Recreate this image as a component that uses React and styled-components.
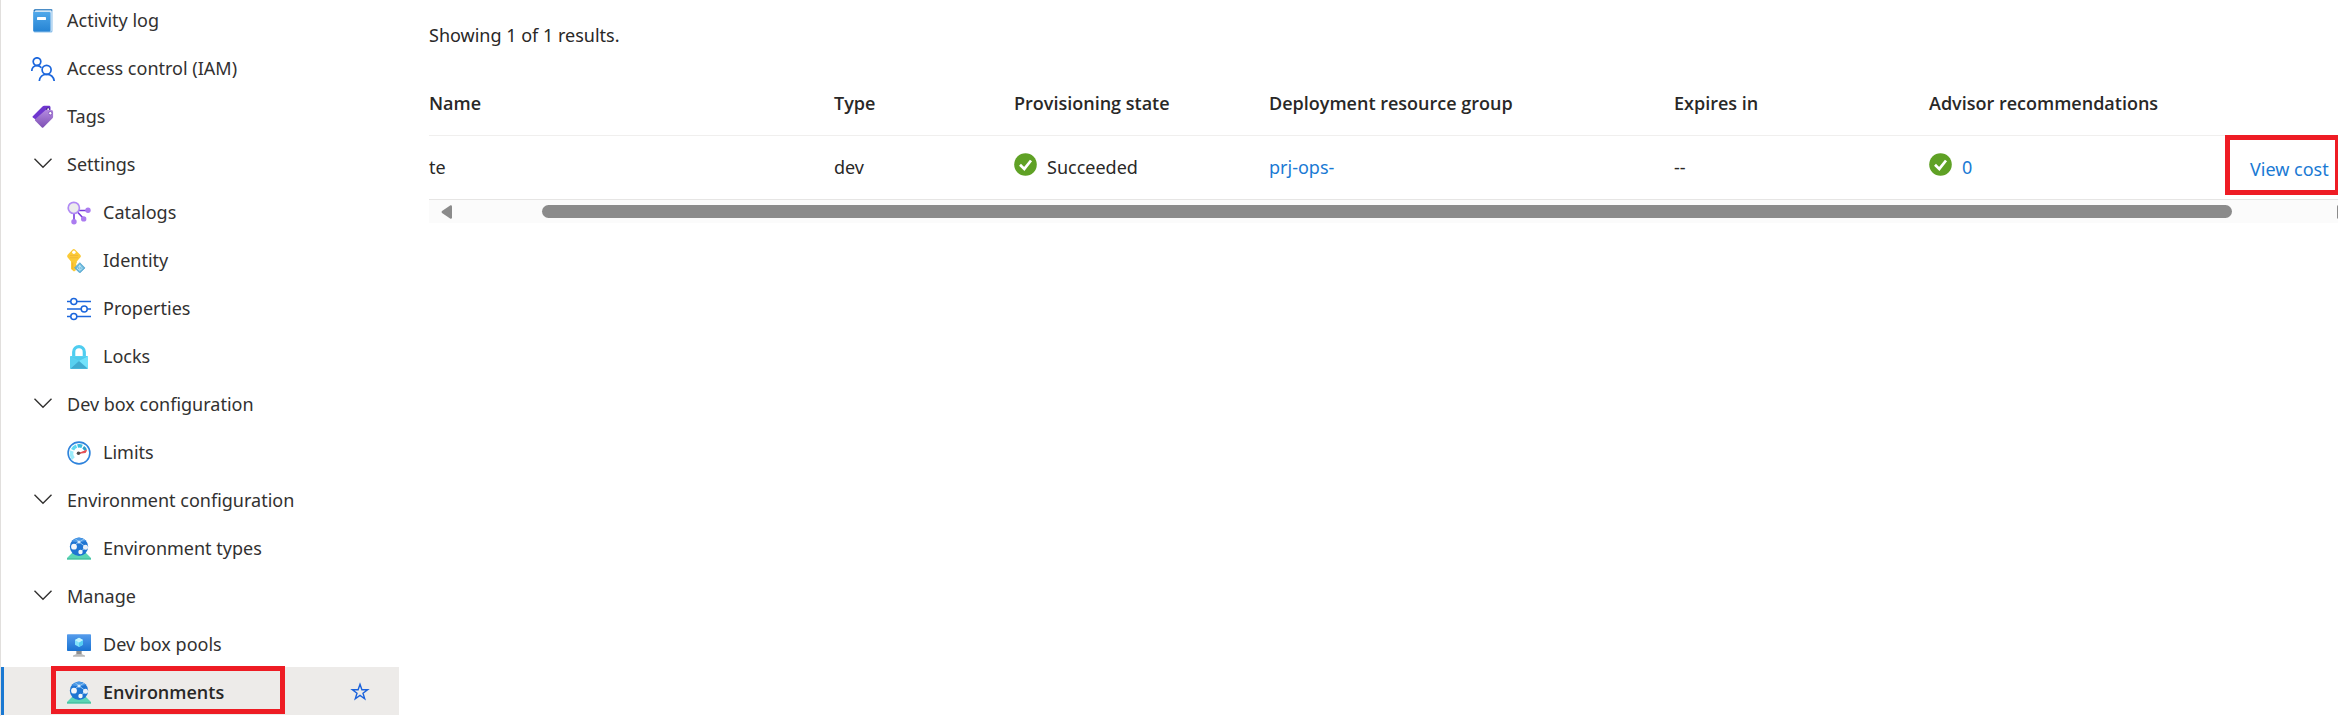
import React from "react";
import styled, { createGlobalStyle, css } from "styled-components";

const GlobalStyle = createGlobalStyle`
  *, *::before, *::after { box-sizing: border-box; }
  body {
    margin: 0;
    background: #fff;
    color: #292827;
    font-family: "Noto Sans", "Open Sans", sans-serif;
    font-size: 18px;
    line-height: 24px;
    overflow: hidden;
  }
  button { font: inherit; color: inherit; border: 0; background: none; padding: 0; cursor: pointer; }
  a { color: #1a7ad4; text-decoration: none; }
`;

const Page = styled.div`
  display: flex;
  align-items: stretch;
  min-height: 100vh;
  overflow: hidden;
`;

const Sidebar = styled.nav`
  flex: 0 0 399px;
  border-left: 1px solid #e1dfdd;
  margin-top: -5px;
`;

const MenuList = styled.ul`
  list-style: none;
  margin: 0;
  padding: 0;
`;

const MenuItem = styled.li`
  position: relative;
  display: flex;
  align-items: center;
  height: 48px;
  padding-top: 2px;
  padding-right: 29px;
  padding-left: ${(p) => (p.$nested ? 66 : 30)}px;
  color: #323130;
  ${(p) =>
    p.$selected &&
    css`
      background: #edebe9;
      box-shadow: inset 3px 0 0 #1a78d2;
      color: #292827;
      font-family: "Open Sans", "Noto Sans", sans-serif;
      font-weight: 600;
    `}
`;

const menuControl = css`
  display: flex;
  align-items: center;
  gap: 12px;
  flex: 1;
  height: 26px;
  color: inherit;
  text-align: left;
  white-space: nowrap;
  svg { flex: none; display: block; }
`;
const MenuLink = styled.a`
  ${menuControl}
  svg { margin-top: 2px; }
`;
const GroupToggle = styled.button`${menuControl}`;

const FavoriteButton = styled.button`
  display: block;
  height: 20px;
  svg { display: block; }
`;

const Highlight = styled.span`
  position: absolute;
  top: ${(p) => p.$top}px;
  left: ${(p) => p.$left}px;
  width: ${(p) => p.$width}px;
  height: ${(p) => p.$height}px;
  border: 5px solid #ee1c24;
  pointer-events: none;
`;

const Main = styled.main`
  flex: 1;
  min-width: 0;
  padding: 23px 0 0 30px;
  overflow: hidden;
`;

const ResultCount = styled.p`
  margin: 0 0 25px;
`;

const Grid = styled.div`
  margin-right: -22px;
`;

const Table = styled.table`
  width: 100%;
  table-layout: fixed;
  border-collapse: separate;
  border-spacing: 0;
`;
const Col = styled.col`
  width: ${(p) => (p.$width ? `${p.$width}px` : "auto")};
`;
const HeaderCell = styled.th`
  height: 64px;
  padding: 0 0 2px;
  border-bottom: 1px solid #f0efee;
  font-family: "Open Sans", "Noto Sans", sans-serif;
  font-weight: 600;
  text-align: left;
  white-space: nowrap;
`;
const Cell = styled.td`
  position: relative;
  height: 64px;
  padding: 0 0 2px;
  border-bottom: 1px solid #e6e5e4;
  white-space: nowrap;
`;
const Status = styled.span`
  display: flex;
  align-items: center;
  gap: 10px;
  height: 28px;
  svg { flex: none; margin-bottom: 4px; }
`;
const CostLink = styled.a`
  display: block;
  padding-top: 4px;
`;

const ScrollBar = styled.div`
  display: flex;
  align-items: center;
  height: 23px;
  padding: 0 12px;
  background: #fbfbfb;
`;
const ScrollArrow = styled.button`
  flex: none;
  width: 11px;
  height: 14px;
  svg { display: block; }
`;
const ScrollRail = styled.div`
  flex: 1;
  padding: 0 105px 0 90px;
`;
const ScrollThumb = styled.div`
  height: 13px;
  border-radius: 7px;
  background: #8b8b8b;
`;

const Icon = ({ children, size = 24, box = "0 0 24 24" }) => (
  <svg width={size} height={size} viewBox={box} fill="none" aria-hidden="true">
    {children}
  </svg>
);

const LogIcon = () => (
  <Icon>
    <defs>
      <linearGradient id="log" x1="0" y1="0" x2="0" y2="1">
        <stop offset="0" stopColor="#50a8ea" />
        <stop offset="1" stopColor="#2684d4" />
      </linearGradient>
    </defs>
    <path d="M4 .5h16a1.500 1.500 0 0 1 1.500 1.500v20a1.500 1.500 0 0 1-1.500 1.500H4A1.500 1.500 0 0 1 2.500 22V2A1.500 1.500 0 0 1 4 .5z" fill="#8cbfe9" />
    <path d="M4 .3h16.500a1 1 0 0 1 1 1L20 2.500H2.600V2A1.700 1.700 0 0 1 4 .3z" fill="#2373b8" />
    <path d="M4.500 1.300H20V3H3.500z" fill="#cfe4f6" />
    <path d="M19.500 2l1-.8v20.600l-1 .6z" fill="#e6f2fb" />
    <path d="M2.200 3h15.600c1 0 1.600.5 1.600 1.500V21c0 1-.5 1.500-1.500 1.500H3.500c-.8 0-1.300-.5-1.300-1.300z" fill="url(#log)" />
    <rect x="6" y="8" width="9" height="3" rx=".4" fill="#fff" />
  </Icon>
);

const PeopleIcon = () => (
  <Icon>
    <g stroke="#1b66dc" strokeWidth="1.700" fill="none">
      <circle cx="6" cy="4.600" r="3.800" />
      <path d="M.8 14C.8 10.800 3 8.600 6 8.600c1.900 0 3.300.7 4.400 2.100" />
      <circle cx="15.600" cy="12.800" r="4.500" />
      <path d="M8.300 24c.3-4 3.300-6.700 7.300-6.700s7 2.700 7.600 6.700" />
    </g>
  </Icon>
);

const TagIcon = () => (
  <Icon>
    <defs>
      <linearGradient id="tag" x1="0" y1="0" x2="0" y2="1">
        <stop offset="0" stopColor="#b48ae0" />
        <stop offset="1" stopColor="#7e50b4" />
      </linearGradient>
    </defs>
    <path d="M1.800 11.200L11.500 1.500c.5-.5 1-.7 1.700-.7h4.700c1 0 1.600.6 1.600 1.500V8L7.500 16.500l-5.700-4.100c-.5-.4-.5-.8 0-1.200z" fill="#6f36cf" />
    <circle cx="17" cy="4.200" r="1.800" fill="#3b1f78" />
    <circle cx="17.200" cy="4.200" r="1" fill="#fff" />
    <path d="M4.200 14.200L14.300 5.300c.5-.5 1-.6 1.700-.6l4.500.4c1 .1 1.600.7 1.600 1.600v5c0 .6-.2 1.100-.6 1.500l-9.200 9.200c-.5.5-1 .5-1.400 0l-6.700-6.700c-.5-.5-.5-1 0-1.500z" fill="url(#tag)" />
    <circle cx="19.300" cy="8.200" r="1.700" fill="#fff" stroke="#7647b4" strokeWidth=".8" />
  </Icon>
);

const ChevronIcon = () => (
  <Icon>
    <path d="M3.500 6.700l8.500 8.500 8.500-8.500" stroke="#323130" strokeWidth="1.400" />
  </Icon>
);

const CatalogIcon = () => (
  <Icon>
    <g stroke="#773adc" strokeWidth="1.600">
      <path d="M7 12v8M9.500 10l7 7.500M11 9.500h10" />
    </g>
    <circle cx="6.800" cy="6.900" r="5.600" fill="#ececec" stroke="#b18af5" strokeWidth="1.700" />
    <g fill="#ab7bf0">
      <circle cx="21" cy="9.300" r="2.700" />
      <circle cx="16.700" cy="17.900" r="2.700" />
      <circle cx="7" cy="20.800" r="2.700" />
    </g>
  </Icon>
);

const KeyIcon = () => (
  <Icon>
    <path d="M6.800 0c.5 0 1 .3 1.400.7l5 5c.9.900.9 2 0 2.900L9.800 12.500V14l-.9 1 .9 1.200-1 1.300 1 1.300-1 1.300v1.200L7 22.500 4 20v-7.500L.7 8.600C0 7.700 0 6.600.7 5.700l4.700-5C5.800.3 6.300 0 6.800 0z" fill="#fbca36" />
    <path d="M5 13.500h1.300v7.300L5 19.700z" fill="#f5b52d" />
    <path d="M3 6.500h8M3 8.700h8" stroke="#efb235" strokeWidth=".7" />
    <circle cx="6.900" cy="3.300" r="1.700" fill="#fff" />
    <path d="M12.800 13.700l5.200 5.200-5.200 5.100-5.200-5.100z" fill="#6ab8dc" stroke="#499cc9" strokeWidth=".7" />
    <path d="M12.800 15.800v5M10 19.200l2.800 2.200 2.800-2.200M12.800 16.500l2 2.200M12.800 16.500l-2 2.200" stroke="#d4f1fb" strokeWidth=".8" />
  </Icon>
);

const SlidersIcon = () => (
  <Icon>
    <g stroke="#1b66dc" strokeWidth="1.700">
      <path d="M0 4.500h24M0 12h24M0 19.500h24" />
      <g fill="#fff" strokeWidth="1.500">
        <circle cx="6.800" cy="4.500" r="3" />
        <circle cx="17.200" cy="12" r="3" />
        <circle cx="6.800" cy="19.500" r="3" />
      </g>
    </g>
  </Icon>
);

const LockIcon = () => (
  <Icon>
    <path d="M6.700 13V7a5.300 5.300 0 0 1 10.600 0V13" stroke="#4fcdf0" strokeWidth="3.200" />
    <path d="M3 12.200c0-.7.4-1.100 1.100-1.100h15.800c.7 0 1.100.4 1.100 1.100v10.500c0 .8-.4 1.300-1.200 1.300H4.200c-.8 0-1.200-.5-1.200-1.300z" fill="#5ed6f6" />
    <path d="M3.200 11.400L12 16l8.800-4.600z" fill="#50cbec" />
    <path d="M3 11.500V23.500L12 16z" fill="#58d0f0" />
    <path d="M21 11.500V23.500L12 16z" fill="#72e2fb" />
    <path d="M3.300 23.700L12 16l8.700 7.700z" fill="#40abd0" />
  </Icon>
);

const GaugeIcon = () => (
  <Icon>
    <circle cx="12" cy="12" r="10.900" fill="#fff" stroke="#2e83dc" strokeWidth="1.600" />
    <path d="M6.500 17.500A7.200 7.200 0 0 1 5 10" stroke="#9becfb" strokeWidth="3.600" />
    <path d="M5.600 8.800A7.200 7.200 0 0 1 9.500 5.200" stroke="#5fd9f2" strokeWidth="3.400" />
    <path d="M10.600 5a7.200 7.200 0 0 1 4.500.4" stroke="#3bbce0" strokeWidth="3.400" />
    <path d="M16.200 6.200a7.200 7.200 0 0 1 2.400 3" stroke="#2f9fcb" strokeWidth="3" />
    <path d="M12 12.300l7.500-3-1 2.200z" fill="#e5484d" stroke="#e5484d" strokeWidth=".9" />
    <circle cx="11.500" cy="12.200" r="1.800" fill="#4d4d4d" />
  </Icon>
);

const GlobeIcon = () => (
  <Icon>
    <path d="M5.500 15.500h13L24 21v1.500H0V21z" fill="#5bd5b5" />
    <path d="M0 21h24v1.500H0z" fill="#4bc4a4" />
    <circle cx="12" cy="9.700" r="9.200" fill="#1f75d2" />
    <path d="M5 4.300A9.200 9.200 0 0 1 19 3.700L12 5.700z" fill="#4a98e6" />
    <path d="M5.500 9.700L12 4.900l7 5.300-5.500 4.500M8 1.500l4 3.400 5-2.800" stroke="#8fc3f3" strokeWidth="1" />
    <circle cx="12" cy="5" r="1.500" fill="#d7ebfc" />
    <circle cx="7" cy="9.700" r="2.900" fill="#f3f6fa" />
    <circle cx="18.500" cy="10.200" r="2.500" fill="#e8eff8" />
    <circle cx="13.500" cy="15" r="2.200" fill="#f3f6fa" />
  </Icon>
);

const MonitorIcon = () => (
  <Icon>
    <defs>
      <linearGradient id="screen" x1="0" y1="0" x2="0" y2="1">
        <stop offset="0" stopColor="#559cec" />
        <stop offset="1" stopColor="#1a72d2" />
      </linearGradient>
    </defs>
    <path d="M9.500 17h5v4l3.500 1.500v1.300H6v-1.300L9.500 21z" fill="#b9b9b9" />
    <path d="M9.500 17h5v4h-5z" fill="#8e8e8e" />
    <rect x="0" y="1.300" width="24" height="16.700" rx=".8" fill="url(#screen)" />
    <path d="M12 4.800l4 2.300v4.600l-4 2.400-4-2.400V7.100z" fill="#83e3fa" />
    <path d="M12 9.400l4-2.300v4.600l-4 2.400z" fill="#55cdf3" />
    <path d="M12 4.800l4 2.300-4 2.300-4-2.300z" fill="#c4f4ff" />
  </Icon>
);

const StarIcon = () => (
  <Icon size={20} box="0 0 20 20">
    <path d="M10 2.300l1.900 5.500h5.700l-4.600 3.400 1.700 5.600-4.700-3.400-4.700 3.400L7 11.200 2.400 7.800h5.700z" stroke="#1b62dc" strokeWidth="1.400" />
  </Icon>
);

const CheckIcon = () => (
  <Icon size={23} box="0 0 23 23">
    <circle cx="11.500" cy="11.500" r="11.300" fill="#5fa125" />
    <path d="M6 11.700l4.300 4.200 6.700-8.400" stroke="#fff" strokeWidth="2.700" />
  </Icon>
);

const ArrowIcon = ({ right }) => (
  <svg width="11" height="14" viewBox="0 0 11 14" aria-hidden="true">
    <path
      d={right ? "M0 1.500Q0 0 1.500.2L10 6q1 1 0 2l-8.500 5.800Q0 14 0 12.500z" : "M11 1.500Q11 0 9.500.2L1 6q-1 1 0 2l8.500 5.800Q11 14 11 12.500z"}
      fill="#8b8b8b"
    />
  </svg>
);

const menu = [
  { label: "Activity log", icon: LogIcon },
  { label: "Access control (IAM)", icon: PeopleIcon },
  { label: "Tags", icon: TagIcon },
  { label: "Settings", group: true },
  { label: "Catalogs", icon: CatalogIcon, nested: true },
  { label: "Identity", icon: KeyIcon, nested: true },
  { label: "Properties", icon: SlidersIcon, nested: true },
  { label: "Locks", icon: LockIcon, nested: true },
  { label: "Dev box configuration", group: true },
  { label: "Limits", icon: GaugeIcon, nested: true },
  { label: "Environment configuration", group: true },
  { label: "Environment types", icon: GlobeIcon, nested: true },
  { label: "Manage", group: true },
  { label: "Dev box pools", icon: MonitorIcon, nested: true },
  { label: "Environments", icon: GlobeIcon, nested: true, selected: true },
];

const columns = [
  { label: "Name", width: 405 },
  { label: "Type", width: 180 },
  { label: "Provisioning state", width: 255 },
  { label: "Deployment resource group", width: 405 },
  { label: "Expires in", width: 255 },
  { label: "Advisor recommendations" },
  { label: "", width: 110 },
];

function MenuEntry({ label, icon: ItemIcon, group, nested, selected }) {
  return (
    <MenuItem $nested={nested} $selected={selected}>
      {group ? (
        <GroupToggle type="button" aria-expanded="true">
          <ChevronIcon />
          {label}
        </GroupToggle>
      ) : (
        <MenuLink href="#" aria-current={selected ? "page" : undefined}>
          <ItemIcon />
          {label}
        </MenuLink>
      )}
      {selected && (
        <>
          <FavoriteButton type="button" aria-label="Add to favorites">
            <StarIcon />
          </FavoriteButton>
          <Highlight $top={-1} $left={50} $width={234} $height={48} />
        </>
      )}
    </MenuItem>
  );
}

export default function App() {
  return (
    <>
      <GlobalStyle />
      <Page>
        <Sidebar aria-label="Resource menu">
          <MenuList>
            {menu.map((item) => (
              <MenuEntry key={item.label} {...item} />
            ))}
          </MenuList>
        </Sidebar>
        <Main>
          <ResultCount>Showing 1 of 1 results.</ResultCount>
          <Grid>
            <Table>
              <colgroup>
                {columns.map((c) => (
                  <Col key={c.label} $width={c.width} />
                ))}
              </colgroup>
              <thead>
                <tr>
                  {columns.map((c) => (
                    <HeaderCell key={c.label} scope="col">
                      {c.label}
                    </HeaderCell>
                  ))}
                </tr>
              </thead>
              <tbody>
                <tr>
                  <Cell>te</Cell>
                  <Cell>dev</Cell>
                  <Cell>
                    <Status>
                      <CheckIcon />
                      Succeeded
                    </Status>
                  </Cell>
                  <Cell>
                    <a href="#">prj-ops-</a>
                  </Cell>
                  <Cell>--</Cell>
                  <Cell>
                    <Status>
                      <CheckIcon />
                      <a href="#">0</a>
                    </Status>
                  </Cell>
                  <Cell>
                    <CostLink href="#">View cost</CostLink>
                    <Highlight $top={-1} $left={-25} $width={115} $height={60} />
                  </Cell>
                </tr>
              </tbody>
            </Table>
            <ScrollBar>
              <ScrollArrow type="button" aria-label="Scroll left">
                <ArrowIcon />
              </ScrollArrow>
              <ScrollRail>
                <ScrollThumb />
              </ScrollRail>
              <ScrollArrow type="button" aria-label="Scroll right">
                <ArrowIcon right />
              </ScrollArrow>
            </ScrollBar>
          </Grid>
        </Main>
      </Page>
    </>
  );
}
